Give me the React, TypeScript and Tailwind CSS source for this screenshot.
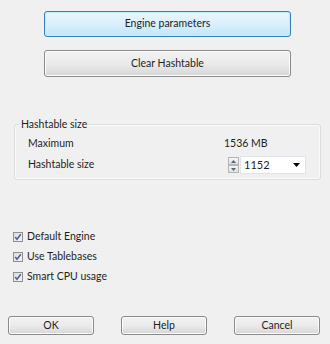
import React from "react"

const font = { fontFamily: "Lato, 'Liberation Sans', sans-serif" }

function WinButton({ label, active, className }: { label: string; active?: boolean; className?: string }) {
    return (
        <button
            className={`relative flex items-center justify-center rounded-[3px] border text-[10.5px] text-[#1e1e1e] ${
                active
                    ? "border-[#3c7fb1] bg-gradient-to-b from-[#eaf6fd] via-[#d9f0fc] to-[#bee6fd] shadow-[inset_0_0_0_1px_#bfeeff]"
                    : "border-[#8a8a8a] bg-gradient-to-b from-[#f2f2f2] via-[#ebebeb] to-[#d6d6d6] shadow-[inset_0_0_0_1px_#fcfcfc]"
            } ${className ?? ""}`}
        >
            {label}
        </button>
    )
}

function Check({ label }: { label: string }) {
    return (
        <label className="flex items-center gap-[4px] h-[20px] text-[10.5px] text-[#1e1e1e]">
            <span className="w-[10px] h-[10px] border border-[#8f8f8f] bg-gradient-to-br from-[#dcdcdc] to-[#f4f4f4] flex items-center justify-center">
                <svg width="8" height="8" viewBox="0 0 8 8">
                    <path d="M1.2 4 L3 6.3 L6.8 1.2" stroke="#4a5f97" strokeWidth="1.5" fill="none" />
                </svg>
            </span>
            {label}
        </label>
    )
}

export default function App() {
    return (
        <div className="w-[330px] h-[344px] bg-[#f0f0f0] flex flex-col" style={font}>
            <div className="flex flex-col pl-[44px] pt-[11px] gap-[13px]">
                <WinButton label="Engine parameters" active className="w-[247px] h-[26px]" />
                <WinButton label="Clear Hashtable" className="w-[247px] h-[27px]" />
            </div>

            <fieldset className="mt-[41px] ml-[14px] mr-[9px] h-[62px] border border-[#dcdcdc] rounded-[3px] px-[13px] pb-[4px] shadow-[inset_0_0_0_1px_#fafafa]">
                <legend className="text-[10.5px] text-[#1e1e1e] -ml-[8px] px-[1px] leading-[12px]">Hashtable size</legend>
                <div className="flex items-center h-[20px] mt-[4px] text-[10.5px] text-[#1e1e1e]">
                    <span className="w-[196px]">Maximum</span>
                    <span>1536 MB</span>
                </div>
                <div className="flex items-center h-[20px] mt-[1px] text-[10.5px] text-[#1e1e1e]">
                    <span className="w-[200px]">Hashtable size</span>
                    <div className="flex flex-col mr-[1px]">
                        <div className="w-[11px] h-[8px] border border-[#b5b5b5] bg-gradient-to-b from-[#f5f5f5] to-[#e0e0e0] flex items-center justify-center">
                            <svg width="5" height="3" viewBox="0 0 5 3"><path d="M0 3 L2.5 0 L5 3 Z" fill="#4e6785" /></svg>
                        </div>
                        <div className="w-[11px] h-[8px] border border-[#b5b5b5] bg-gradient-to-b from-[#f5f5f5] to-[#e0e0e0] flex items-center justify-center">
                            <svg width="5" height="3" viewBox="0 0 5 3"><path d="M0 0 L2.5 3 L5 0 Z" fill="#4e6785" /></svg>
                        </div>
                    </div>
                    <div className="w-[66px] h-[18px] bg-white border border-[#e2e3ea] flex items-center pl-[3px] pr-[5px]">
                        <span className="flex-1 text-[11px]">1152</span>
                        <svg width="7" height="4" viewBox="0 0 7 4"><path d="M0 0 L7 0 L3.5 4 Z" fill="#000" /></svg>
                    </div>
                </div>
            </fieldset>

            <div className="flex flex-col mt-[47px] pl-[13px]">
                <Check label="Default Engine" />
                <Check label="Use Tablebases" />
                <Check label="Smart CPU usage" />
            </div>

            <div className="flex justify-between pl-[8px] pr-[10px] mt-[29px]">
                <WinButton label="OK" className="w-[86px] h-[19px]" />
                <WinButton label="Help" className="w-[86px] h-[19px]" />
                <WinButton label="Cancel" className="w-[86px] h-[19px]" />
            </div>
        </div>
    )
}
